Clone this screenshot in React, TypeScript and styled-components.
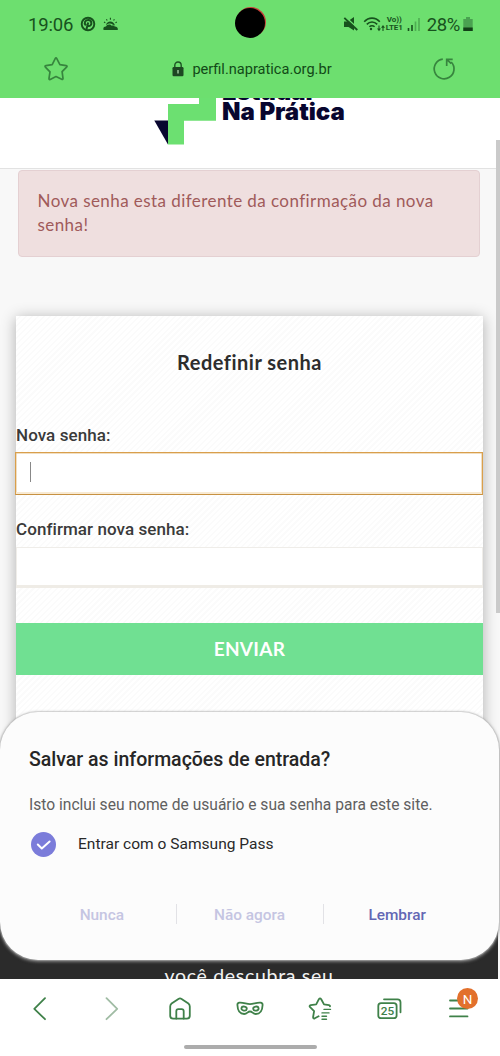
import React from 'react';
import styled, { createGlobalStyle } from 'styled-components';

const GlobalStyle = createGlobalStyle`
  * { box-sizing: border-box; }
  body { margin: 0; background: #fff; font-family: Roboto, "Liberation Sans", sans-serif; }
  svg { display: block; flex: none; }
`;

const Phone = styled.div`
  position: relative;
  width: 500px;
  height: 1056px;
  display: flex;
  flex-direction: column;
  overflow: hidden;
  background: #fff;
`;

const BrowserTop = styled.header`
  height: 98px;
  flex: none;
  background: #6ddf6f;
  color: #17521d;
`;

const StatusBar = styled.div`
  position: relative;
  height: 48px;
  padding: 0 26px 0 28px;
  display: flex;
  align-items: center;
`;

const StatusText = styled.span<{ $spacing: number; $left?: number }>`
  margin-left: ${(p) => p.$left ?? 0}px;
  font-size: 18.5px;
  line-height: 24px;
  padding-top: 1px;
  letter-spacing: ${(p) => p.$spacing}px;
  white-space: nowrap;
`;

const StatusLeft = styled.div`
  display: flex;
  align-items: center;
  gap: 7px;
`;

const StatusRight = styled.div`
  margin-left: auto;
  display: flex;
  align-items: center;
`;

const TrafficIcon = styled.svg`
  margin-left: -4px;
`;

const BatteryIcon = styled.svg`
  margin-left: 2px;
`;

const Camera = styled.div`
  position: absolute;
  left: 235px;
  top: 8px;
  width: 30px;
  height: 30px;
  border-radius: 50%;
  background: #000;
  box-shadow: 1px -1px 0 #c93f38;
`;

const VoLte = styled.div`
  width: 19px;
  margin: 0 2px 0 0;
  display: flex;
  flex-direction: column;
  align-items: center;
  font-size: 8px;
  line-height: 8px;
  font-weight: 700;
  letter-spacing: -0.1px;
  white-space: nowrap;
`;

const AddressBar = styled.div`
  height: 42px;
  padding: 0 44px 0 43px;
  display: flex;
  align-items: center;
  justify-content: space-between;
`;

const Address = styled.div`
  display: flex;
  align-items: center;
  gap: 8px;
  margin-left: 3px;
  font-size: 14.6px;
  line-height: 20px;
  color: #124a17;
`;

const Viewport = styled.main`
  position: relative;
  height: 881px;
  flex: none;
  overflow: hidden;
  background: #f8f8f8;
`;

const SiteHeader = styled.div`
  height: 71px;
  padding-left: 154px;
  display: flex;
  gap: 6px;
  overflow: hidden;
  background: #fff;
  border-bottom: 1px solid #e2e2e2;
`;

const Wordmark = styled.div`
  margin-top: -16px;
  font: 900 24px/20px Inter, "Liberation Sans", sans-serif;
  letter-spacing: -0.05px;
  color: #08062f;
  white-space: nowrap;
`;

const Alert = styled.div`
  margin: 1px 20px 0 18px;
  height: 87px;
  padding: 18px 18.5px;
  border: 1.5px solid #e4d0d2;
  border-radius: 4px;
  background: #efdfdf;
  color: #a05a5a;
  font: 400 17px/24px Lato, "Open Sans", sans-serif;
  letter-spacing: 0.43px;
`;

const Card = styled.section`
  margin: 59px 17px 0 16px;
  height: 560px;
  background: repeating-linear-gradient(135deg, #fff 0 2.6px, #fbfbfb 2.6px 4.2px);
  box-shadow: 0 2px 14px rgba(0, 0, 0, 0.3);
`;

const CardTitle = styled.h1`
  margin: 0;
  padding-top: 33px;
  text-align: center;
  font: 700 20px/26px Lato, "Open Sans", sans-serif;
  letter-spacing: 0.5px;
  color: #2d2d2d;
`;

const FieldLabel = styled.label<{ $top: number }>`
  display: block;
  margin-top: ${(p) => p.$top}px;
  font-size: 17px;
  line-height: 24px;
  font-weight: 500;
  letter-spacing: 0.07px;
  color: #3a3a3a;
`;

const Field = styled.div<{ $active?: boolean }>`
  height: ${(p) => (p.$active ? 43 : 41)}px;
  margin: ${(p) => (p.$active ? '5px 0 0 -1px' : '6px 0 0')};
  padding: ${(p) => (p.$active ? '9px 14px' : '0')};
  background: #fff;
  border: 1px solid ${(p) => (p.$active ? '#d99f4c' : '#efede9')};
  border-bottom: ${(p) => (p.$active ? '1px solid #c79142' : '3px solid #efece6')};
  box-shadow: ${(p) => (p.$active ? 'inset 0 -2px 0 #f8ead3, inset 0 0 0 0.5px #e3bd84' : 'none')};
`;

const Caret = styled.div`
  width: 1px;
  height: 20px;
  background: #888;
`;

const Submit = styled.div`
  height: 52px;
  margin-top: 35px;
  display: flex;
  align-items: center;
  justify-content: center;
  background: #70e092;
  color: #fff;
  font: 700 19px/24px Lato, "Open Sans", sans-serif;
  letter-spacing: 0.3px;
`;

const SiteFooter = styled.footer`
  margin: 14px 2px 0 0;
  height: 100px;
  padding-top: 74px;
  background: #2b2b2b;
  color: #f2f2f2;
  text-align: center;
  font: 400 19.5px/24px Lato, "Open Sans", sans-serif;
  letter-spacing: 0.7px;
`;

const ScrollThumb = styled.div`
  position: absolute;
  right: 0;
  top: 42px;
  width: 4px;
  height: 473px;
  background: #cacaca;
`;

const Sheet = styled.aside`
  position: absolute;
  left: 0;
  right: 1px;
  top: 614px;
  height: 248px;
  padding: 34px 29px 0;
  border-radius: 38px;
  background: #fcfcfc;
  box-shadow: 0 0 0 1px rgba(190, 190, 190, 0.35), 0 1px 3px 1px rgba(150, 150, 150, 0.8);
`;

const SheetTitle = styled.h2`
  margin: 0;
  font-size: 19.5px;
  line-height: 28px;
  font-weight: 500;
  color: #262626;
`;

const SheetText = styled.p`
  margin: 19px 0 0;
  font-size: 15.6px;
  line-height: 25px;
  color: #606060;
  white-space: nowrap;
`;

const PassRow = styled.div`
  height: 26px;
  margin: 13px 0 0 2px;
  display: flex;
  align-items: center;
  gap: 22px;
  font-size: 15.55px;
  line-height: 20px;
  color: #292929;
`;

const SheetActions = styled.div`
  height: 24px;
  margin: 46px -1px 0;
  display: grid;
  grid-template-columns: 1fr 1fr 1fr;
`;

const SheetAction = styled.div<{ $strong?: boolean }>`
  position: relative;
  display: flex;
  align-items: center;
  justify-content: center;
  font-size: 15.4px;
  font-weight: 500;
  color: ${(p) => (p.$strong ? '#6367b4' : '#c5c5e2')};
  &:not(:first-child)::before {
    content: '';
    position: absolute;
    left: 0;
    top: 1px;
    width: 1px;
    height: 20px;
    background: #e2e2e6;
  }
`;

const BottomNav = styled.nav`
  flex: 1;
  display: flex;
  flex-direction: column;
  align-items: center;
`;

const NavItems = styled.div`
  width: 100%;
  height: 60px;
  padding: 0 25px 0 25px;
  display: flex;
  align-items: center;
  justify-content: space-between;
`;

const NavItem = styled.div`
  position: relative;
  width: 30px;
  height: 30px;
`;

const Badge = styled.span`
  position: absolute;
  left: 12px;
  top: -6px;
  width: 21px;
  height: 21px;
  border-radius: 50%;
  background: #e2702c;
  color: #fff;
  font-size: 13.5px;
  line-height: 22px;
  text-align: center;
`;

const HomeHandle = styled.div`
  width: 133px;
  height: 4.5px;
  margin-top: 5.5px;
  border-radius: 3px;
  background: #acacac;
`;

const NavIcon = ({ children, faded }: { children: React.ReactNode; faded?: boolean }) => (
  <svg width="30" height="30" viewBox="0 0 30 30" fill="none" stroke={faded ? '#a0bca4' : '#3f8149'} strokeWidth="1.8" strokeLinecap="round" strokeLinejoin="round">
    {children}
  </svg>
);

export default function App() {
  return (
    <>
      <GlobalStyle />
      <Phone>
        <BrowserTop>
          <StatusBar>
            <StatusLeft>
              <StatusText $spacing={-0.15}>19:06</StatusText>
              <svg width="16" height="16" viewBox="0 0 16 16" fill="none">
                <circle cx="8" cy="8" r="6.3" stroke="#17521d" strokeWidth="1.9" />
                <path d="M6.2 14.2 8.2 6.5M5.8 9.3C3.5 6.7 5.4 3.9 8.3 3.9c4.1 0 3.8 6.1.8 6.1-1 0-1.5-.6-1.5-1" stroke="#17521d" strokeWidth="2" />
              </svg>
              <svg width="15" height="14" viewBox="0 0 15 14">
                <path d="M.6 13C-.3 10.6 1.4 9.3 3 9.5c.8-2.6 4.6-2.7 5.7-.7 1.3-.7 2.6-.2 3.1.8 2-.1 3.5 1.3 2.9 3.4Z" fill="#17521d" />
                <path d="M3 8.2C3.8 3.2 10.6 3.2 12 8.4L9.6 7.6C8 5.8 5.2 6.1 3 8.2Z" fill="#17521d" />
                <path d="M7.4.8v1.9M3.4 2.2l.8 1.4M11.4 2.2l-.8 1.4M1 5l1.3.7M13.8 5l-1.3.7" stroke="#17521d" strokeWidth="1.1" />
              </svg>
            </StatusLeft>
            <Camera />
            <StatusRight>
              <svg width="17" height="16" viewBox="0 0 17 16">
                <path d="M1 5.5h3.5L11 .9V14.5L5.5 11H1Z" fill="#17521d" />
                <path d="M2.8 1.3 15.5 13" stroke="#6ddf6f" strokeWidth="1.6" />
                <path d="M1.3 1.8 14.3 14" stroke="#17521d" strokeWidth="1.8" />
              </svg>
              <svg width="21" height="17" viewBox="0 0 21 17" fill="none" stroke="#17521d" strokeWidth="1.6">
                <path d="M1.2 5.8C5.5.9 12.5.9 16.8 5.8M3.8 8.4c3-3.2 7.4-3.2 10.4 0M6.4 10.8c1.5-1.5 3.7-1.5 5.2 0" transform="translate(3 0)" />
                <circle cx="11" cy="13" r="1.2" fill="#17521d" stroke="none" />
              </svg>
              <TrafficIcon width="8" height="17" viewBox="0 0 8 17" fill="none" stroke="#17521d" strokeWidth="1.1">
                <path d="M2 9.5v4M6 15v-4" />
                <path d="m0 12.4 2 2.8 2-2.8ZM4 11.8l2-2.8 2 2.8Z" fill="#17521d" stroke="none" />
              </TrafficIcon>
              <VoLte><span>Vo))</span><span>LTE1</span></VoLte>
              <svg width="16" height="16" viewBox="0 0 16 16" stroke="#17521d" strokeWidth="1.6">
                <path d="M2.5 12v3M6 9v6" />
                <path d="M9.5 5.5V15M13 2v13" opacity=".35" />
              </svg>
              <StatusText $spacing={-0.35} $left={5}>28%</StatusText>
              <BatteryIcon width="12" height="16" viewBox="0 0 12 16">
                <path d="M4 1h4v2h2.7v12H1.3V3H4Z" fill="#4aa251" />
                <path d="M1.3 11.5h9.4V15H1.3Z" fill="#123f17" />
              </BatteryIcon>
            </StatusRight>
          </StatusBar>
          <AddressBar>
            <svg width="26" height="26" viewBox="0 0 26 26" fill="none" stroke="#37853e" strokeWidth="1.7" strokeLinejoin="round">
              <path d="M12.2 2.6q.8-1.5 1.6 0l3.1 6 6.3 1q1.5.3.4 1.5l-4.5 4.6.9 6.6q0 1.6-1.3 1L13 20.6l-5.8 2.8q-1.4.5-1.2-1l1-6.6-4.6-4.7q-1-1.2.5-1.5l6.3-1Z" />
            </svg>
            <Address>
              <svg width="12" height="16" viewBox="0 0 12 16" fill="none">
                <path d="M2.8 7V4.2a3.2 3.2 0 0 1 6.4 0V7" stroke="#1d5423" strokeWidth="1.4" />
                <rect x=".5" y="6" width="11" height="9.3" rx="1.2" fill="#1d4722" />
                <path d="M6 9v3.5" stroke="#9bc49b" strokeWidth="1.5" />
              </svg>
              <span>perfil.napratica.org.br</span>
            </Address>
            <svg width="24" height="24" viewBox="0 0 24 24" fill="none" stroke="#37853e" strokeWidth="1.7">
              <path d="M10.8 2.1A9.9 9.9 0 1 0 19.2 5M14.7 9V2.4h6M14.7 2.4l4.6 4.3" />
            </svg>
          </AddressBar>
        </BrowserTop>

        <Viewport>
          <SiteHeader>
            <svg width="62" height="47" viewBox="0 0 62 47">
              <path d="M45 0h17v22.7H30V46.5H14V6h31Z" fill="#6ce071" />
              <path d="M.3 22.5H14v24Z" fill="#08062f" />
            </svg>
            <Wordmark>Estudar<br />Na Prática</Wordmark>
          </SiteHeader>
          <Alert>Nova senha esta diferente da confirmação da nova senha!</Alert>
          <Card>
            <CardTitle>Redefinir senha</CardTitle>
            <FieldLabel $top={48}>Nova senha:</FieldLabel>
            <Field $active><Caret /></Field>
            <FieldLabel $top={22}>Confirmar nova senha:</FieldLabel>
            <Field />
            <Submit>ENVIAR</Submit>
          </Card>
          <SiteFooter>você descubra seu</SiteFooter>
          <ScrollThumb />
          <Sheet>
            <SheetTitle>Salvar as informações de entrada?</SheetTitle>
            <SheetText>Isto inclui seu nome de usuário e sua senha para este site.</SheetText>
            <PassRow>
              <svg width="25" height="25" viewBox="0 0 25 25" fill="none">
                <circle cx="12.5" cy="12.5" r="12.5" fill="#7b7cda" />
                <path d="m6.8 12.5 4 4 7.8-7" stroke="#fff" strokeWidth="2" strokeLinecap="round" strokeLinejoin="round" />
              </svg>
              <span>Entrar com o Samsung Pass</span>
            </PassRow>
            <SheetActions>
              <SheetAction>Nunca</SheetAction>
              <SheetAction>Não agora</SheetAction>
              <SheetAction $strong>Lembrar</SheetAction>
            </SheetActions>
          </Sheet>
        </Viewport>

        <BottomNav>
          <NavItems>
            <NavItem><NavIcon><path d="M20 4.2 9.3 14.8 20 25.2" /></NavIcon></NavItem>
            <NavItem><NavIcon faded><path d="M11.5 4.2 22.2 14.8 11.5 25.2" /></NavIcon></NavItem>
            <NavItem>
              <NavIcon>
                <path d="M5.2 12.5q0-1.8 1.4-3l6.8-4.6q1.6-1 3.2 0l6.8 4.6q1.4 1.2 1.4 3v9.2q0 3-3 3H8.2q-3 0-3-3Z" />
                <path d="M11.3 24.5v-7.3q0-2 2-2h3.4q2 0 2 2v7.3" />
              </NavIcon>
            </NavItem>
            <NavItem>
              <NavIcon>
                <path d="M2.4 11q-.1-2 2-2.3c4-.4 7 1.4 10.6 1.4s6.6-1.8 10.6-1.4q2.1.3 2 2.3c-.2 5.2-2.5 9-6.8 9-3.2 0-3.2-2.5-5.8-2.5S12.4 20 9.2 20c-4.3 0-6.6-3.8-6.8-9Z" />
                <ellipse cx="9.1" cy="14.6" rx="2.7" ry="2" transform="rotate(12 9.1 14.6)" />
                <ellipse cx="20.9" cy="14.6" rx="2.7" ry="2" transform="rotate(-12 20.9 14.6)" />
              </NavIcon>
            </NavItem>
            <NavItem>
              <NavIcon>
                <path d="M25 12.4q.2-1-1-1.3l-5-.7-2.8-5.2q-1.2-1.8-2.3 0l-2.7 5.2-5.4.8q-2 .5-.7 2l4 3.9-1 5.9q-.1 2 1.7 1.3l3.8-2" />
                <path d="M19 15.4h6.5M17 18.9h7M17 22.2h4.5M17 25.2h4.5" strokeWidth="1.4" />
              </NavIcon>
            </NavItem>
            <NavItem>
              <NavIcon>
                <rect x="3.3" y="9.2" width="18.3" height="15" rx="2.8" />
                <path d="M9 5.3h13.5q3 0 3 3v10" />
                <text x="12.4" y="20.8" textAnchor="middle" fontSize="11.8" fontWeight="500" fontFamily="Roboto, sans-serif" fill="#3f8149" stroke="none">25</text>
              </NavIcon>
            </NavItem>
            <NavItem>
              <NavIcon><path d="M5 6.5h17.5M5 14.5h17.5M5 22.4h17.5" /></NavIcon>
              <Badge>N</Badge>
            </NavItem>
          </NavItems>
          <HomeHandle />
        </BottomNav>
      </Phone>
    </>
  );
}
